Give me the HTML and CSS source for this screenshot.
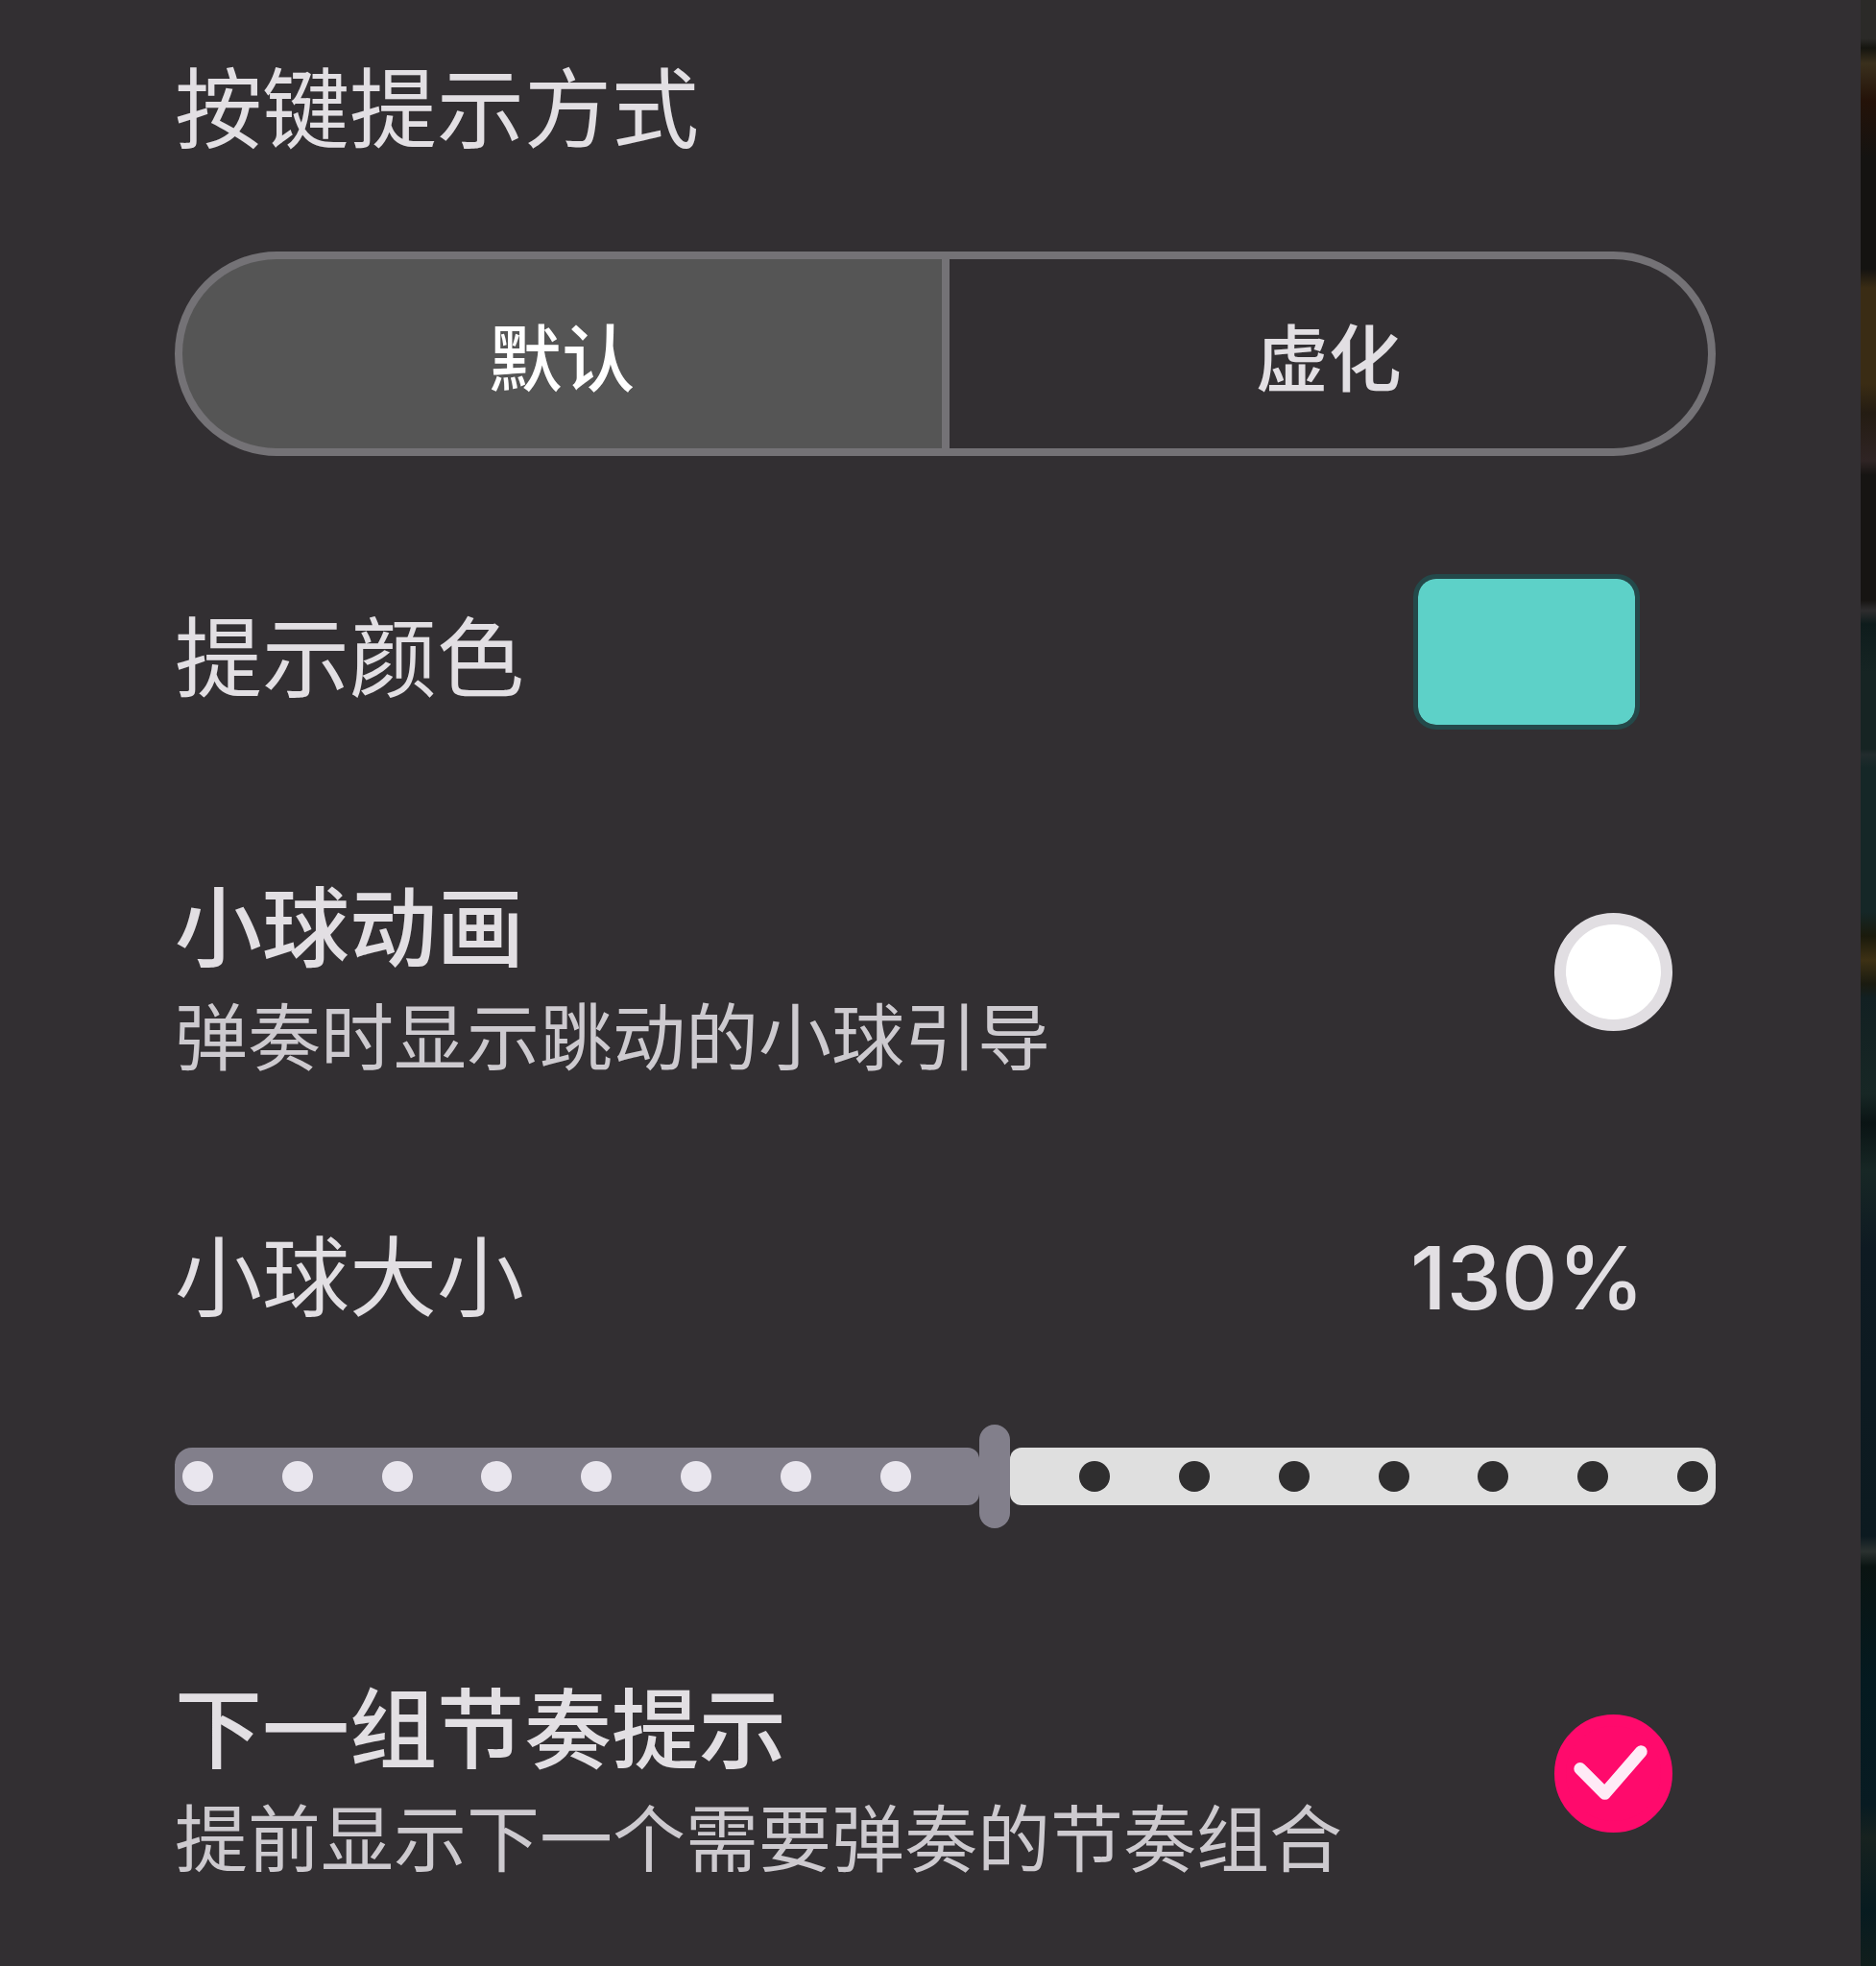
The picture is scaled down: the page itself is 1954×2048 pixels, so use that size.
FILE: index.html
```html
<!DOCTYPE html>
<html lang="zh-CN">
<head>
    <meta charset="UTF-8">
    <meta name="viewport" content="width=device-width, initial-scale=1.0">
    <title>按键提示设置</title>
    <link rel="stylesheet" href="styles.css">
</head>
<body>

<div class="page">
    <main class="panel">
        <h2 class="title" id="mode-title">按键提示方式</h2>
        <div class="segmented" role="group" aria-labelledby="mode-title">
            <button type="button" class="segment active" aria-pressed="true">默认</button>
            <button type="button" class="segment" aria-pressed="false">虚化</button>
        </div>

        <div class="row color-row">
            <label class="title" for="hint-color">提示颜色</label>
            <input type="color" class="swatch" id="hint-color" value="#5dd1c8">
        </div>

        <div class="row check-row">
            <label class="text" for="ball-anim">
                <span class="title strong">小球动画</span>
                <span class="desc">弹奏时显示跳动的小球引导</span>
            </label>
            <span class="check">
                <input type="checkbox" id="ball-anim">
                <svg viewBox="0 0 124 124" aria-hidden="true"><path d="M27 57 L53 83 L91 39"/></svg>
            </span>
        </div>

        <div class="row size-row">
            <label class="title" for="ball-size">小球大小</label>
            <output class="value" id="size-value" for="ball-size">130%</output>
        </div>
        <div class="slider" id="slider">
            <div class="fill"></div>
            <div class="rest"></div>
            <div class="dots" id="dots"></div>
            <input type="range" id="ball-size" min="50" max="200" step="10" value="130">
        </div>

        <div class="row check-row">
            <label class="text" for="next-hint">
                <span class="title strong">下一组节奏提示</span>
                <span class="desc">提前显示下一个需要弹奏的节奏组合</span>
            </label>
            <span class="check">
                <input type="checkbox" id="next-hint" checked>
                <svg viewBox="0 0 124 124" aria-hidden="true"><path d="M27 57 L53 83 L91 39"/></svg>
            </span>
        </div>
    </main>
    <div class="backdrop"></div>
</div>

<script>
    const range = document.getElementById("ball-size");
    const slider = document.getElementById("slider");
    const dots = document.getElementById("dots");
    const steps = (range.max - range.min) / range.step;

    for (let i = 0; i <= steps; i++) {
        dots.appendChild(document.createElement("span"));
    }

    function updateSlider() {
        const ratio = (range.value - range.min) / (range.max - range.min);
        slider.style.setProperty("--ratio", ratio);
        document.getElementById("size-value").textContent = range.value + "%";
        Array.from(dots.children).forEach((dot, i) => {
            dot.className = i <= ratio * steps ? "on" : "";
        });
    }

    range.addEventListener("input", updateSlider);
    updateSlider();

    const segments = document.querySelectorAll(".segment");
    segments.forEach((segment) => {
        segment.addEventListener("click", () => {
            segments.forEach((s) => {
                s.classList.toggle("active", s === segment);
                s.setAttribute("aria-pressed", s === segment);
            });
        });
    });
</script>

</body>
</html>
```
FILE: styles.css
```css
* {
    box-sizing: border-box;
}
body {
    margin: 0;
    background-color: #322f32;
    color: #e2dfe3;
    font-family: "Noto Sans CJK SC", sans-serif;
}
.page {
    display: grid;
    grid-template-columns: 1fr 16px;
    min-height: 100vh;
}
.panel {
    padding: 47px 151px 80px 182px;
}
.title {
    display: block;
    margin: 0;
    font-size: 91px;
    font-weight: 400;
    line-height: 120px;
}
.strong {
    font-weight: 500;
}
.desc {
    font-size: 76px;
    line-height: 96px;
    color: #cdcacf;
}
.segmented {
    display: grid;
    grid-template-columns: 1fr 1fr;
    gap: 8px;
    height: 213px;
    margin-top: 95px;
    border: 8px solid #747276;
    border-radius: 107px;
    background-color: #747276;
    overflow: hidden;
}
.segment {
    border: 0;
    padding: 0;
    background-color: #322f32;
    color: #e2dfe3;
    font-family: inherit;
    font-size: 76px;
    font-weight: 500;
    cursor: pointer;
}
.segment.active {
    background-color: #555555;
    color: #fff;
}
.row {
    display: flex;
    justify-content: space-between;
    align-items: center;
    margin-top: 140px;
}
.color-row {
    margin-top: 123px;
    padding-right: 79px;
}
.swatch {
    appearance: none;
    width: 236px;
    height: 162px;
    padding: 0;
    border: 5px solid #24494a;
    border-radius: 24px;
    background: none;
    overflow: hidden;
    cursor: pointer;
}
.swatch::-webkit-color-swatch-wrapper {
    padding: 0;
}
.swatch::-webkit-color-swatch {
    border: 0;
    border-radius: 18px;
}
.check-row {
    padding-right: 45px;
}
.text {
    display: flex;
    flex-direction: column;
    gap: 8px;
}
.check {
    display: grid;
    width: 123px;
    height: 123px;
}
.check input, .check svg {
    grid-area: 1 / 1;
    width: 100%;
    height: 100%;
    margin: 0;
}
.check input {
    appearance: none;
    border: 12px solid #e1dee2;
    border-radius: 50%;
    background-color: #fff;
    cursor: pointer;
}
.check input:checked {
    border-color: #ff0a6c;
    background-color: #ff0a6c;
}
.check svg {
    visibility: hidden;
    pointer-events: none;
    fill: none;
    stroke: #ffeaf6;
    stroke-width: 13;
    stroke-linecap: round;
    stroke-linejoin: round;
}
.check input:checked + svg {
    visibility: visible;
}
.size-row {
    align-items: baseline;
    padding-right: 74px;
}
.value {
    font-family: Inter, sans-serif;
    font-size: 91px;
    font-weight: 500;
    line-height: 100px;
}
.slider {
    --ratio: 0;
    position: relative;
    display: flex;
    align-items: center;
    gap: 32px;
    height: 108px;
    margin: 100px 0 143px;
}
.slider + .row {
    margin-top: 0;
}
.fill {
    width: calc(8px + (100% - 48px) * var(--ratio));
    height: 60px;
    border-radius: 18px 12px 12px 18px;
    background-color: #827f8b;
}
.rest {
    flex: 1;
    height: 60px;
    border-radius: 12px 18px 18px 12px;
    background-color: #dfdfdf;
}
.dots {
    position: absolute;
    inset: 0 8px;
    display: flex;
    justify-content: space-between;
    align-items: center;
}
.dots span {
    width: 32px;
    height: 32px;
    border-radius: 50%;
    background-color: #2f2e2f;
}
.dots .on {
    background-color: #e9e6ee;
}
.slider input {
    appearance: none;
    position: absolute;
    inset: 0 8px;
    margin: 0;
    background: none;
    cursor: pointer;
}
.slider input::-webkit-slider-thumb {
    appearance: none;
    width: 32px;
    height: 108px;
    border-radius: 16px;
    background-color: #827f8b;
}
/* sliver of the game scene left visible beside the panel */
.backdrop {
    background: linear-gradient(
        #2b2a28 0, #2b2a28 40px, #15150f 50px, #3a301d 66px, #241208 105px,
        #141311 165px, #141311 280px, #3a2c14 300px, #3a2c14 400px, #241c12 430px,
        #2f2424 480px, #161412 495px, #161412 625px, #2e2d2e 636px, #0e1c1c 650px,
        #162423 700px, #162423 780px, #222c2d 786px, #152727 800px, #152727 950px,
        #1a1a0c 975px, #3d3114 1000px, #1a1b10 1025px, #122022 1040px,
        #172725 1140px, #0a1414 1170px, #172725 1220px, #0e1a22 1300px,
        #0c1a20 1600px, #2b3230 1616px, #0a1412 1632px, #041a20 1750px,
        #081b22 1880px, #17221f 1915px, #071b20 1990px, #111e1c 2048px
    );
}
```
